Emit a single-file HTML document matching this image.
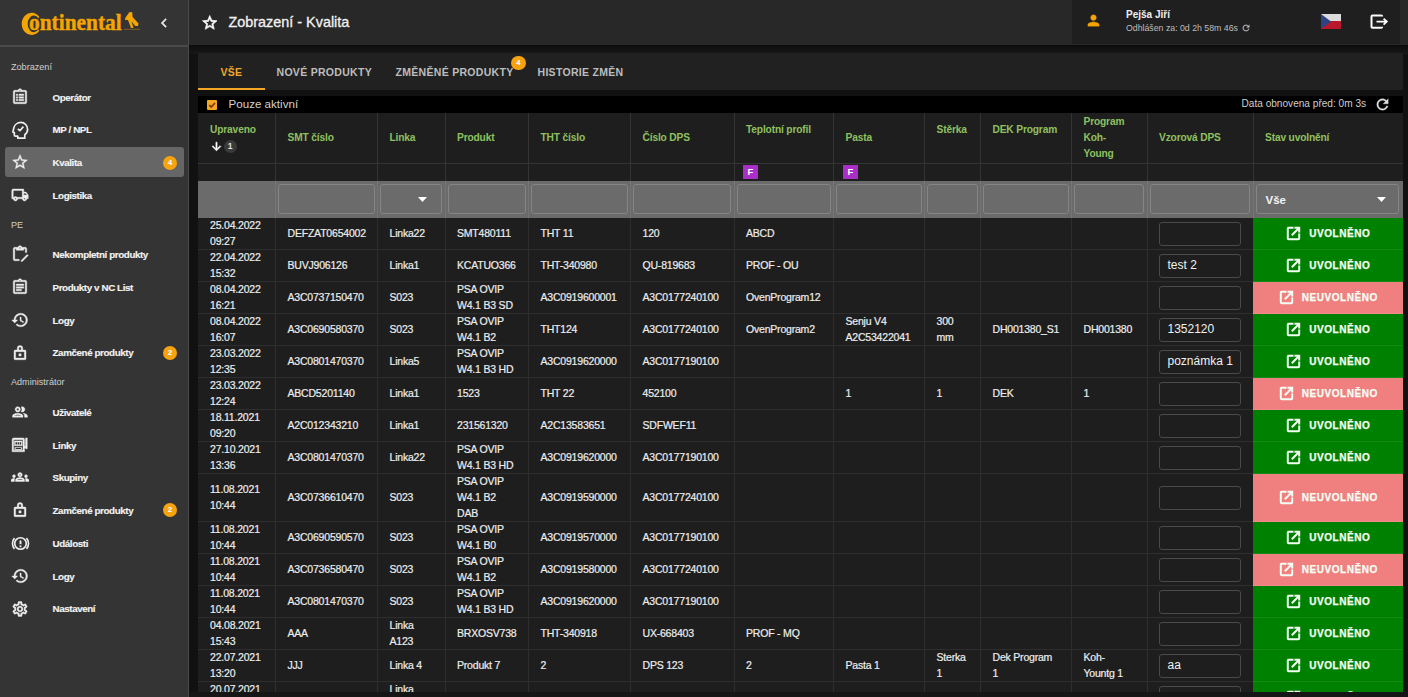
<!DOCTYPE html><html><head><meta charset="utf-8"><style>
*{box-sizing:border-box;margin:0;padding:0}
html,body{width:1408px;height:697px;overflow:hidden;background:#111111;font-family:"Liberation Sans",sans-serif;}
.a{position:absolute}
#side{left:0;top:0;width:189px;height:697px;background:#343434;border-right:1px solid #4a4a4a}
#sidehead{left:0;top:0;width:188px;height:47px;background:#343434;border-bottom:2px solid #4a4a4a}
#head{left:189px;top:0;width:1219px;height:45px;background:#282828}
#userbox{left:1072px;top:0;width:328px;height:43.5px;background:#1f1f1f}
.lbl{color:#cfcfcf;font-size:9.1px;left:11px;line-height:12px}
.it{left:52.5px;color:#f2f2f2;font-size:9.8px;font-weight:bold;line-height:12px;letter-spacing:-0.4px;-webkit-text-stroke:0.15px #f2f2f2}
.ico{left:12px;width:16px;height:16px}
.badge{width:14px;height:14px;border-radius:7px;background:#f5a30f;color:#fff;font-size:8px;text-align:center;line-height:14px;font-weight:bold}
#tabs{left:198px;top:53px;width:1205px;height:37.4px;background:#212121}
.tab{top:66px;font-size:10.5px;font-weight:bold;letter-spacing:0.3px;color:#bdbdbd;line-height:12px}
#chk{left:198px;top:96px;width:1205px;height:17.4px;background:#000}
#thead{left:198px;top:113.4px;width:1205px;height:104.4px;background:#1e1e1e}
#filt{left:198px;top:181px;width:1205px;height:36.8px;background:#6b6b6b}
.th{color:#8fc060;font-size:10.2px;font-weight:bold;line-height:16px;letter-spacing:-0.15px}
.vl{width:1px;background:#343434}
.hl{height:1px;background:#343434}
.td{color:#ededed;font-size:10.5px;line-height:16px;white-space:nowrap;letter-spacing:-0.2px;-webkit-text-stroke:0.2px #ededed}
.inp{border:1.5px solid #858585;border-radius:3px;background:#6b6b6b}
.vin{border:1.5px solid #4a4a4a;border-radius:3px;background:#1e1e1e;color:#f0f0f0;font-size:12px;padding-left:8px}
.st{color:#f4fff4;font-size:10px;font-weight:bold;letter-spacing:0.55px;text-align:center;-webkit-text-stroke:0.25px #f4fff4}
</style></head><body>
<div id="side" class="a"></div><div id="sidehead" class="a"></div>
<svg class="a" style="left:0;top:0" width="188" height="45" viewBox="0 0 188 45"><path d="M39.1 16.8A9.8 11.1 0 1 0 39.1 31L38.4 29.3A6.1 8.3 0 1 1 38.4 18.5Z" fill="#f5a500"/><path d="M129.5 12 L132.2 12.3 L132.6 17 L138.5 23.5 L138 26 L135.2 26 L131.5 21.5 L133.5 28 L131 28 L128 20 L125 20 L125.5 17.5 Z" fill="#f5a500"/><path d="M124 29.3h16" stroke="#a07020" stroke-width="0.7"/></svg>
<div class="a" style="left:29px;top:8.5px;font-family:'Liberation Serif',serif;font-weight:bold;color:#f5a500;font-size:23px;line-height:28px;transform:scaleX(0.93);transform-origin:0 0;-webkit-text-stroke:0.4px #f5a500">ontinental</div>
<svg class="a" style="left:155px;top:14px;" width="18" height="18" viewBox="0 0 24 24" fill="#e8e8e8" stroke="#e8e8e8" stroke-width="0.5"><path d="M15.41 7.41L14 6l-6 6 6 6 1.41-1.41L10.83 12z"/></svg>
<div class="a" style="left:5px;top:147.3px;width:178.6px;height:29.8px;border-radius:3px;background:#666666"></div>
<div class="a lbl" style="top:61px">Zobrazení</div>
<div class="a it" style="top:91.5px">Operátor</div>
<svg class="a" style="left:11px;top:88px;" width="18" height="18" viewBox="0 0 24 24" fill="#eeeeee" stroke="#eeeeee" stroke-width="0.5"><path d="M19 3h-4.18C14.4 1.84 13.3 1 12 1s-2.4.84-2.82 2H5c-1.1 0-2 .9-2 2v14c0 1.1.9 2 2 2h14c1.1 0 2-.9 2-2V5c0-1.1-.9-2-2-2zm-7 0c.55 0 1 .45 1 1s-.45 1-1 1-1-.45-1-1 .45-1 1-1zm7 16H5V5h14v14z"/><path d="M7 8h2v2H7zm0 3.5h2v2H7zm0 3.5h2v2H7zm3.5-7h6.5v2h-6.5zm0 3.5h6.5v2h-6.5zm0 3.5h6.5v2h-6.5z"/></svg>
<div class="a it" style="top:124.0px">MP / NPL</div>
<svg class="a" style="left:8px;top:118.0px" width="26" height="24" viewBox="0 0 26 24" fill="none" stroke="#eee" stroke-width="1.7" stroke-linejoin="round"><path d="M5.2 12.6C5.6 7.8 8.6 4.4 12.7 4.4C16.9 4.4 19.6 7.6 19.6 11.4C19.6 13.6 18.6 15.4 16.8 16.6V20.2H9.8V18.2H7.6C6.8 18.2 6.3 17.6 6.3 16.9V14.6L4.9 14.2Z"/><path d="M9.8 10.8 11.9 12.7 15.4 8.6"/></svg>
<div class="a it" style="top:156.5px">Kvalita</div>
<svg class="a" style="left:11px;top:153px;" width="18" height="18" viewBox="0 0 24 24" fill="#eeeeee" stroke="#eeeeee" stroke-width="0.5"><path d="M22 9.24l-7.19-.62L12 2 9.19 8.63 2 9.24l5.46 4.73L5.82 21 12 17.27 18.18 21l-1.63-7.03L22 9.24zM12 15.4l-3.76 2.27 1-4.28-3.32-2.88 4.38-.38L12 6.1l1.71 4.04 4.38.38-3.32 2.88 1 4.28L12 15.4z"/></svg>
<div class="a it" style="top:189.5px">Logistika</div>
<svg class="a" style="left:11px;top:186px;" width="18" height="18" viewBox="0 0 24 24" fill="#eeeeee" stroke="#eeeeee" stroke-width="0.5"><path d="M20 8h-3V4H3c-1.1 0-2 .9-2 2v11h2c0 1.66 1.34 3 3 3s3-1.34 3-3h6c0 1.66 1.34 3 3 3s3-1.34 3-3h2v-5l-3-4zm-.5 1.5l1.96 2.5H17V9.5h2.5zM6 18c-.55 0-1-.45-1-1s.45-1 1-1 1 .45 1 1-.45 1-1 1zm2.22-3c-.55-.61-1.33-1-2.22-1s-1.67.39-2.22 1H3V6h12v9H8.22zM18 18c-.55 0-1-.45-1-1s.45-1 1-1 1 .45 1 1-.45 1-1 1z"/></svg>
<div class="a lbl" style="top:219px">PE</div>
<div class="a it" style="top:248.5px">Nekompletní produkty</div>
<svg class="a" style="left:11px;top:245px;" width="18" height="18" viewBox="0 0 24 24" fill="#eeeeee" stroke="#eeeeee" stroke-width="0.5"><path d="M11 19H5V5h2v2h10V5h2v5h2V5c0-1.1-.9-2-2-2h-4.18C14.4 1.84 13.3 1 12 1s-2.4.84-2.82 2H5c-1.1 0-2 .9-2 2v14c0 1.1.9 2 2 2h6v-2zM12 3c.55 0 1 .45 1 1s-.45 1-1 1-1-.45-1-1 .45-1 1-1z"/><path d="M21.5 12.5l1.5 1.5-8 8h-1.5v-1.5z"/></svg>
<div class="a it" style="top:281.5px">Produkty v NC List</div>
<svg class="a" style="left:11px;top:278px;" width="18" height="18" viewBox="0 0 24 24" fill="#eeeeee" stroke="#eeeeee" stroke-width="0.5"><path d="M19 3h-4.18C14.4 1.84 13.3 1 12 1s-2.4.84-2.82 2H5c-1.1 0-2 .9-2 2v14c0 1.1.9 2 2 2h14c1.1 0 2-.9 2-2V5c0-1.1-.9-2-2-2zm-7 0c.55 0 1 .45 1 1s-.45 1-1 1-1-.45-1-1 .45-1 1-1zm7 16H5V5h14v14z"/><path d="M7 8h10v2H7zm0 3.5h10v2H7zm0 3.5h7v2H7z"/></svg>
<div class="a it" style="top:314.5px">Logy</div>
<svg class="a" style="left:11px;top:311px;" width="18" height="18" viewBox="0 0 24 24" fill="#eeeeee" stroke="#eeeeee" stroke-width="0.5"><path d="M13 3c-4.97 0-9 4.03-9 9H1l3.89 3.89.07.14L9 12H6c0-3.87 3.13-7 7-7s7 3.13 7 7-3.13 7-7 7c-1.93 0-3.68-.79-4.94-2.06l-1.42 1.42C8.27 19.99 10.51 21 13 21c4.97 0 9-4.03 9-9s-4.03-9-9-9zm-1 5v5l4.28 2.54.72-1.21-3.5-2.08V8H12z"/></svg>
<div class="a it" style="top:347.0px">Zamčené produkty</div>
<svg class="a" style="left:11px;top:343.5px;" width="18" height="18" viewBox="0 0 24 24" fill="#eeeeee" stroke="#eeeeee" stroke-width="0.5"><path fill-rule="evenodd" d="M5.5 8h13A1.5 1.5 0 0 1 20 9.5v10a1.5 1.5 0 0 1-1.5 1.5h-13A1.5 1.5 0 0 1 4 19.5v-10A1.5 1.5 0 0 1 5.5 8zM6.2 10.2v8.6h11.6v-8.6z"/><path d="M8.3 8V5.7a3.7 3.7 0 0 1 7.4 0V8h-2.1V5.7a1.6 1.6 0 0 0-3.2 0V8zM10.5 13h3v3h-3z"/></svg>
<div class="a lbl" style="top:376px">Administrátor</div>
<div class="a it" style="top:406.5px">Uživatelé</div>
<svg class="a" style="left:11px;top:403px;" width="18" height="18" viewBox="0 0 24 24" fill="#eeeeee" stroke="#eeeeee" stroke-width="0.5"><path d="M9 13.75c-2.34 0-7 1.17-7 3.5V19h14v-1.75c0-2.33-4.66-3.5-7-3.5zM4.34 17c.84-.58 2.870-1.25 4.66-1.25s3.82.67 4.66 1.25H4.34zM9 12c1.93 0 3.5-1.57 3.5-3.5S10.93 5 9 5 5.5 6.57 5.5 8.5 7.07 12 9 12zm0-5c.83 0 1.5.67 1.5 1.5S9.830 10 9 10s-1.5-.67-1.5-1.5S8.17 7 9 7zm7.04 6.81c1.16.84 1.96 1.96 1.96 3.44V19h4v-1.75c0-2.02-3.5-3.17-5.96-3.44zM15 12c1.93 0 3.5-1.57 3.5-3.5S16.93 5 15 5c-.54 0-1.04.13-1.5.35.63.89 1 1.98 1 3.15s-.37 2.26-1 3.15c.46.22.96.35 1.5.35z"/></svg>
<div class="a it" style="top:439.5px">Linky</div>
<svg class="a" style="left:11px;top:436px;" width="18" height="18" viewBox="0 0 24 24" fill="#eeeeee" stroke="#eeeeee" stroke-width="0.5"><path fill-rule="evenodd" d="M1.5 4.5Q1.5 2.5 3.5 2.5h12.5q2 0 2 2V21H1.5zM3.5 5v14h12.5V5z"/><path d="M4.5 6.5h10.5v6.5H4.5zM5 15.2h9.5v3H5zM19.3 2.5h2.4v14.5h-2.4zM17.5 13.5h2v2h-2z"/><path d="M6 8.2h2v3.2H6zM8.8 8.2h2v3.2h-2zM11.6 8.2h2v3.2h-2zM6.2 16h7.1v1.4H6.2z" fill="#343434" stroke="none"/></svg>
<div class="a it" style="top:471.5px">Skupiny</div>
<svg class="a" style="left:11px;top:468px;" width="18" height="18" viewBox="0 0 24 24" fill="#eeeeee" stroke="#eeeeee" stroke-width="0.5"><path d="M4 13c1.1 0 2-.9 2-2 0-1.1-.9-2-2-2s-2 .9-2 2c0 1.1.9 2 2 2zm1.13 1.1c-.37-.06-.74-.1-1.13-.1-.99 0-1.930.21-2.78.58C.48 14.9 0 15.62 0 16.43V18h4.5v-1.61c0-.83.23-1.61.63-2.29zM20 13c1.1 0 2-.9 2-2 0-1.1-.9-2-2-2s-2 .9-2 2c0 1.1.9 2 2 2zm4 3.43c0-.81-.48-1.53-1.22-1.85-.85-.37-1.79-.58-2.78-.58-.39 0-.76.04-1.13.1.4.68.63 1.46.63 2.29V18H24v-1.57zm-7.76-2.78c-1.17-.52-2.61-.9-4.24-.9-1.63 0-3.07.39-4.24.9C6.68 14.13 6 15.21 6 16.39V18h12v-1.61c0-1.18-.68-2.26-1.76-2.74zM8.07 16c.09-.23.13-.39.91-.69.97-.38 1.99-.56 3.02-.56s2.05.18 3.02.56c.77.3.81.46.91.69H8.07zM12 8c.55 0 1 .45 1 1s-.45 1-1 1-1-.45-1-1 .45-1 1-1m0-2c-1.66 0-3 1.34-3 3s1.34 3 3 3 3-1.34 3-3-1.34-3-3-3z"/></svg>
<div class="a it" style="top:504.5px">Zamčené produkty</div>
<svg class="a" style="left:11px;top:501px;" width="18" height="18" viewBox="0 0 24 24" fill="#eeeeee" stroke="#eeeeee" stroke-width="0.5"><path fill-rule="evenodd" d="M5.5 8h13A1.5 1.5 0 0 1 20 9.5v10a1.5 1.5 0 0 1-1.5 1.5h-13A1.5 1.5 0 0 1 4 19.5v-10A1.5 1.5 0 0 1 5.5 8zM6.2 10.2v8.6h11.6v-8.6z"/><path d="M8.3 8V5.7a3.7 3.7 0 0 1 7.4 0V8h-2.1V5.7a1.6 1.6 0 0 0-3.2 0V8zM10.5 13h3v3h-3z"/></svg>
<div class="a it" style="top:537.5px">Události</div>
<svg class="a" style="left:10.5px;top:533.5px" width="19" height="19" viewBox="0 0 24 24" fill="none" stroke="#eee" stroke-width="2.1"><circle cx="12" cy="12" r="7.3"/><path d="M4.4 5.2A10.4 10.4 0 0 0 4.4 18.8M19.6 5.2A10.4 10.4 0 0 1 19.6 18.8"/><path d="M12 8.2V13M12 14.6V16.6" stroke-width="2.4"/></svg>
<div class="a it" style="top:570.5px">Logy</div>
<svg class="a" style="left:11px;top:567px;" width="18" height="18" viewBox="0 0 24 24" fill="#eeeeee" stroke="#eeeeee" stroke-width="0.5"><path d="M13 3c-4.97 0-9 4.03-9 9H1l3.89 3.89.07.14L9 12H6c0-3.87 3.13-7 7-7s7 3.13 7 7-3.13 7-7 7c-1.93 0-3.68-.79-4.94-2.06l-1.42 1.42C8.27 19.99 10.51 21 13 21c4.97 0 9-4.03 9-9s-4.03-9-9-9zm-1 5v5l4.28 2.54.72-1.21-3.5-2.08V8H12z"/></svg>
<div class="a it" style="top:603.0px">Nastavení</div>
<svg class="a" style="left:11px;top:599.5px;" width="18" height="18" viewBox="0 0 24 24" fill="#eeeeee" stroke="#eeeeee" stroke-width="0.5"><path d="M19.43 12.98c.04-.32.07-.64.07-.98 0-.34-.03-.66-.07-.98l2.11-1.65c.19-.15.24-.42.12-.64l-2-3.46c-.09-.16-.26-.25-.44-.25-.06 0-.12.01-.17.03l-2.49 1c-.52-.4-1.08-.73-1.690-.98l-.38-2.65C14.46 2.18 14.25 2 14 2h-4c-.25 0-.46.18-.49.42l-.38 2.65c-.61.25-1.170.59-1.69.98l-2.49-1c-.06-.02-.12-.03-.18-.03-.17 0-.34.09-.43.25l-2 3.46c-.13.22-.07.49.12.64l2.11 1.65c-.04.32-.07.65-.07.98 0 .33.03.66.07.98l-2.11 1.65c-.19.15-.24.42-.12.64l2 3.46c.09.16.26.25.44.25.06 0 .12-.01.17-.03l2.49-1c.52.4 1.08.73 1.69.98l.38 2.65c.03.24.24.42.49.42h4c.25 0 .46-.18.49-.42l.38-2.65c.61-.25 1.17-.59 1.69-.98l2.49 1c.06.02.12.03.18.03.17 0 .34-.09.43-.25l2-3.46c.12-.22.07-.49-.12-.64l-2.11-1.65zm-1.98-1.71c.04.31.05.52.05.73 0 .21-.02.43-.05.73l-.14 1.13.89.7 1.08.84-.7 1.21-1.27-.51-1.04-.42-.9.68c-.43.32-.84.56-1.25.73l-1.06.43-.16 1.13-.2 1.35h-1.4l-.19-1.35-.16-1.13-1.06-.43c-.43-.18-.83-.41-1.23-.71l-.91-.7-1.06.43-1.27.51-.7-1.21 1.08-.84.89-.7-.14-1.13c-.03-.31-.05-.54-.05-.74s.02-.43.05-.73l.14-1.13-.89-.7-1.08-.84.7-1.21 1.27.51 1.04.42.9-.68c.43-.32.84-.56 1.25-.73l1.06-.43.16-1.13.2-1.35h1.39l.19 1.35.16 1.13 1.06.43c.43.18.83.41 1.23.71l.91.7 1.06-.43 1.27-.51.7 1.21-1.07.85-.89.7.14 1.130zM12 8c-2.21 0-4 1.790-4 4s1.79 4 4 4 4-1.79 4-4-1.79-4-4-4zm0 6c-1.1 0-2-.9-2-2s.9-2 2-2 2 .9 2 2-.9 2-2 2z"/></svg>
<div class="a badge" style="left:163px;top:155.5px">4</div>
<div class="a badge" style="left:163px;top:345.5px">2</div>
<div class="a badge" style="left:163px;top:503px">2</div>
<div id="head" class="a"></div><div id="userbox" class="a"></div>
<svg class="a" style="left:201px;top:13.8px;" width="17.5" height="17.5" viewBox="0 0 24 24" fill="#ffffff" stroke="#ffffff" stroke-width="0.9"><path d="M22 9.24l-7.19-.62L12 2 9.19 8.63 2 9.24l5.46 4.73L5.82 21 12 17.27 18.18 21l-1.63-7.03L22 9.24zM12 15.4l-3.76 2.27 1-4.28-3.32-2.88 4.38-.38L12 6.1l1.71 4.04 4.38.38-3.32 2.88 1 4.28L12 15.4z"/></svg>
<div class="a" style="left:228.5px;top:13px;color:#f2f2f2;font-size:14.4px;line-height:18px;-webkit-text-stroke:0.3px #f2f2f2">Zobrazení - Kvalita</div>
<svg class="a" style="left:1085px;top:11.7px;" width="17" height="17" viewBox="0 0 24 24" fill="#f5a500" stroke="#f5a500" stroke-width="0.5"><path d="M12 12c2.21 0 4-1.79 4-4s-1.79-4-4-4-4 1.79-4 4 1.79 4 4 4zm0 2c-2.67 0-8 1.34-8 4v2h16v-2c0-2.66-5.33-4-8-4z"/></svg>
<div class="a" style="left:1126px;top:8.7px;color:#f0f0f0;font-size:10px;font-weight:bold;line-height:12px">Pejša Jiří</div>
<div class="a" style="left:1126px;top:22px;color:#bdbdbd;font-size:8.75px;line-height:12px">Odhlášen za: 0d 2h 58m 46s</div>
<svg class="a" style="left:1241px;top:23px;" width="10" height="10" viewBox="0 0 24 24" fill="#bdbdbd" stroke="#bdbdbd" stroke-width="0.5"><path d="M17.65 6.35C16.2 4.9 14.21 4 12 4c-4.42 0-7.99 3.58-7.99 8s3.57 8 7.99 8c3.73 0 6.84-2.55 7.73-6h-2.08c-.82 2.33-3.04 4-5.65 4-3.31 0-6-2.69-6-6s2.69-6 6-6c1.66 0 3.14.69 4.22 1.78L13 11h7V4l-2.35 2.35z"/></svg>
<div class="a" style="left:1321px;top:14px;width:20px;height:15px;background:linear-gradient(#dcdcdc 50%,#b8182c 50%)"></div>
<svg class="a" style="left:1321px;top:14px" width="20" height="15"><path d="M0 0 L10 7.5 L0 15Z" fill="#2d4386"/></svg>
<svg class="a" style="left:1368px;top:12px" width="22" height="18" viewBox="0 0 22 18"><path d="M14.2 4.2V4.5Q14.2 3.5 13.2 3.5H4.5Q3.5 3.5 3.5 4.5V14.7Q3.5 15.7 4.5 15.7H13.2Q14.2 15.7 14.2 14.7" fill="none" stroke="#fff" stroke-width="2"/><path d="M8.5 9.6H18.5M15.6 6.6 18.8 9.6 15.6 12.6" fill="none" stroke="#fff" stroke-width="1.8"/></svg>
<div class="a" style="left:189px;top:45px;width:1219px;height:9px;background:linear-gradient(#0c0c0c,#181818)"></div>
<div id="tabs" class="a"></div>
<div class="a" style="left:198px;top:88px;width:67px;height:2px;background:#f5a623"></div>
<div class="a tab" style="left:220.5px;color:#f2a62a">VŠE</div>
<div class="a tab" style="left:276.5px">NOVÉ PRODUKTY</div>
<div class="a tab" style="left:395.5px">ZMĚNĚNÉ PRODUKTY</div>
<div class="a tab" style="left:537.5px">HISTORIE ZMĚN</div>
<div class="a badge" style="left:511px;top:55.7px;width:14.8px;height:14.8px;line-height:14.8px;font-size:7.5px;border-radius:8px">4</div>
<div id="chk" class="a"></div>
<div class="a" style="left:206.5px;top:99.5px;width:10px;height:10px;background:#f5a623;border-radius:1px"></div>
<svg class="a" style="left:206.5px;top:99.5px" width="10" height="10" viewBox="0 0 10 10"><path d="M2.2 5 4.2 7 8 3" fill="none" stroke="#7a3510" stroke-width="1.6"/></svg>
<div class="a" style="left:228.5px;top:96.5px;color:#d0d0d0;font-size:11.6px;line-height:14px">Pouze aktivní</div>
<div class="a" style="left:1241.5px;top:98px;color:#cfcfcf;font-size:10.1px;line-height:12px">Data obnovena před: 0m 3s</div>
<svg class="a" style="left:1373.5px;top:96px;" width="17" height="17" viewBox="0 0 24 24" fill="#e0e0e0" stroke="#e0e0e0" stroke-width="0.5"><path d="M17.65 6.35C16.2 4.9 14.21 4 12 4c-4.42 0-7.99 3.58-7.99 8s3.57 8 7.99 8c3.73 0 6.84-2.55 7.73-6h-2.08c-.82 2.33-3.04 4-5.65 4-3.31 0-6-2.69-6-6s2.69-6 6-6c1.66 0 3.14.69 4.22 1.78L13 11h7V4l-2.35 2.35z"/></svg>
<div id="thead" class="a"></div><div id="filt" class="a"></div>
<div class="a th" style="left:210px;top:122px">Upraveno</div>
<div class="a th" style="left:287.5px;top:130px">SMT číslo</div>
<div class="a th" style="left:389.5px;top:130px">Linka</div>
<div class="a th" style="left:457px;top:130px">Produkt</div>
<div class="a th" style="left:540.5px;top:130px">THT číslo</div>
<div class="a th" style="left:642.5px;top:130px">Číslo DPS</div>
<div class="a th" style="left:746px;top:122px">Teplotní profil</div>
<div class="a th" style="left:845.5px;top:130px">Pasta</div>
<div class="a th" style="left:936.5px;top:122px">Stěrka</div>
<div class="a th" style="left:992.5px;top:122px">DEK Program</div>
<div class="a th" style="left:1083.5px;top:114px">Program<br>Koh-<br>Young</div>
<div class="a th" style="left:1159px;top:130px">Vzorová DPS</div>
<div class="a th" style="left:1265px;top:130px">Stav uvolnění</div>
<div class="a" style="left:743px;top:164.5px;width:14.5px;height:14.5px;background:#a92fc6"><span class="a" style="left:4.6px;top:2.5px;color:#fff;font-size:9.5px;font-weight:bold;line-height:10px">F</span></div>
<div class="a" style="left:843px;top:164.5px;width:14.5px;height:14.5px;background:#a92fc6"><span class="a" style="left:4.6px;top:2.5px;color:#fff;font-size:9.5px;font-weight:bold;line-height:10px">F</span></div>
<svg class="a" style="left:209.5px;top:139.5px;" width="13" height="13" viewBox="0 0 24 24" fill="#ffffff" stroke="#ffffff" stroke-width="1.2"><path d="M20 12l-1.41-1.41L13 16.17V4h-2v12.17l-5.58-5.59L4 12l8 8 8-8z"/></svg>
<div class="a" style="left:223.5px;top:140px;width:13px;height:13px;border-radius:7px;background:#3a3a3a;color:#e0e0e0;font-size:8.5px;font-weight:bold;text-align:center;line-height:13px">1</div>
<div class="a hl" style="left:198px;top:162.5px;width:1205px"></div>
<div class="a inp" style="left:278.0px;top:183.5px;width:96.5px;height:30.5px"></div>
<div class="a inp" style="left:380.0px;top:183.5px;width:62.0px;height:30.5px"></div>
<div class="a inp" style="left:447.5px;top:183.5px;width:78.0px;height:30.5px"></div>
<div class="a inp" style="left:531.0px;top:183.5px;width:96.5px;height:30.5px"></div>
<div class="a inp" style="left:633.0px;top:183.5px;width:98.0px;height:30.5px"></div>
<div class="a inp" style="left:736.5px;top:183.5px;width:94.0px;height:30.5px"></div>
<div class="a inp" style="left:836.0px;top:183.5px;width:85.5px;height:30.5px"></div>
<div class="a inp" style="left:927.0px;top:183.5px;width:50.5px;height:30.5px"></div>
<div class="a inp" style="left:983.0px;top:183.5px;width:85.5px;height:30.5px"></div>
<div class="a inp" style="left:1074.0px;top:183.5px;width:70.0px;height:30.5px"></div>
<div class="a inp" style="left:1149.5px;top:183.5px;width:100.5px;height:30.5px"></div>
<div class="a inp" style="left:1256px;top:184px;width:143px;height:30px"></div>
<div class="a" style="left:1265.5px;top:193px;color:#f4f4f4;font-size:11.5px;font-weight:bold;line-height:14px">Vše</div>
<svg class="a" style="left:1377px;top:197px" width="9" height="5"><path d="M0 0H9L4.5 5Z" fill="#fff"/></svg>
<svg class="a" style="left:418px;top:197px" width="9" height="5"><path d="M0 0H9L4.5 5Z" fill="#fff"/></svg>
<div class="a" style="left:198px;top:217.8px;width:1205px;height:480px;background:#1e1e1e"></div>
<div class="a vl" style="left:275.0px;top:113.4px;height:68px"></div><div class="a vl" style="left:275.0px;top:181px;height:36.8px;background:#757575"></div>
<div class="a vl" style="left:275.0px;top:217.8px;height:480px;background:#2e2e2e"></div>
<div class="a vl" style="left:377.0px;top:113.4px;height:68px"></div><div class="a vl" style="left:377.0px;top:181px;height:36.8px;background:#757575"></div>
<div class="a vl" style="left:377.0px;top:217.8px;height:480px;background:#2e2e2e"></div>
<div class="a vl" style="left:444.5px;top:113.4px;height:68px"></div><div class="a vl" style="left:444.5px;top:181px;height:36.8px;background:#757575"></div>
<div class="a vl" style="left:444.5px;top:217.8px;height:480px;background:#2e2e2e"></div>
<div class="a vl" style="left:528.0px;top:113.4px;height:68px"></div><div class="a vl" style="left:528.0px;top:181px;height:36.8px;background:#757575"></div>
<div class="a vl" style="left:528.0px;top:217.8px;height:480px;background:#2e2e2e"></div>
<div class="a vl" style="left:630.0px;top:113.4px;height:68px"></div><div class="a vl" style="left:630.0px;top:181px;height:36.8px;background:#757575"></div>
<div class="a vl" style="left:630.0px;top:217.8px;height:480px;background:#2e2e2e"></div>
<div class="a vl" style="left:733.5px;top:113.4px;height:68px"></div><div class="a vl" style="left:733.5px;top:181px;height:36.8px;background:#757575"></div>
<div class="a vl" style="left:733.5px;top:217.8px;height:480px;background:#2e2e2e"></div>
<div class="a vl" style="left:833.0px;top:113.4px;height:68px"></div><div class="a vl" style="left:833.0px;top:181px;height:36.8px;background:#757575"></div>
<div class="a vl" style="left:833.0px;top:217.8px;height:480px;background:#2e2e2e"></div>
<div class="a vl" style="left:924.0px;top:113.4px;height:68px"></div><div class="a vl" style="left:924.0px;top:181px;height:36.8px;background:#757575"></div>
<div class="a vl" style="left:924.0px;top:217.8px;height:480px;background:#2e2e2e"></div>
<div class="a vl" style="left:980.0px;top:113.4px;height:68px"></div><div class="a vl" style="left:980.0px;top:181px;height:36.8px;background:#757575"></div>
<div class="a vl" style="left:980.0px;top:217.8px;height:480px;background:#2e2e2e"></div>
<div class="a vl" style="left:1071.0px;top:113.4px;height:68px"></div><div class="a vl" style="left:1071.0px;top:181px;height:36.8px;background:#757575"></div>
<div class="a vl" style="left:1071.0px;top:217.8px;height:480px;background:#2e2e2e"></div>
<div class="a vl" style="left:1146.5px;top:113.4px;height:68px"></div><div class="a vl" style="left:1146.5px;top:181px;height:36.8px;background:#757575"></div>
<div class="a vl" style="left:1146.5px;top:217.8px;height:480px;background:#2e2e2e"></div>
<div class="a vl" style="left:1252.5px;top:113.4px;height:68px"></div><div class="a vl" style="left:1252.5px;top:181px;height:36.8px;background:#757575"></div>
<div class="a vl" style="left:1252.5px;top:217.8px;height:480px;background:#2e2e2e"></div>
<div class="a td" style="left:210px;top:217.1px">25.04.2022<br>09:27</div>
<div class="a td" style="left:287.5px;top:225.1px">DEFZAT0654002</div>
<div class="a td" style="left:389.5px;top:225.1px">Linka22</div>
<div class="a td" style="left:457px;top:225.1px">SMT480111</div>
<div class="a td" style="left:540.5px;top:225.1px">THT 11</div>
<div class="a td" style="left:642.5px;top:225.1px">120</div>
<div class="a td" style="left:746px;top:225.1px">ABCD</div>
<div class="a vin" style="left:1158.5px;top:221.6px;width:82px;height:24px;line-height:21px"></div>
<div class="a" style="left:1253px;top:217.6px;width:150px;height:32.0px;background:#008000"></div>
<div class="a hl" style="left:198px;top:249.1px;width:1055px;background:#2e2e2e"></div><div class="a hl" style="left:1253px;top:249.1px;width:150px;background:rgba(255,255,255,0.08)"></div>
<div class="a st" style="left:1253px;top:225.6px;width:150px;height:16px;display:flex;align-items:center;justify-content:center;padding-left:0.5px"><svg width="15" height="15" viewBox="0 0 16 16" fill="none" stroke="#f4fff4" stroke-width="2.1" style="margin-right:8px"><path d="M8 1.9H2.9a1 1 0 0 0-1 1v10.2a1 1 0 0 0 1 1h10.2a1 1 0 0 0 1-1V8"/><path d="M6.2 9.8 13.6 2.4M9 1.9h5.1V7"/></svg><span style="line-height:12px">UVOLNĚNO</span></div>
<div class="a td" style="left:210px;top:249.10000000000002px">22.04.2022<br>15:32</div>
<div class="a td" style="left:287.5px;top:257.1px">BUVJ906126</div>
<div class="a td" style="left:389.5px;top:257.1px">Linka1</div>
<div class="a td" style="left:457px;top:257.1px">KCATUO366</div>
<div class="a td" style="left:540.5px;top:257.1px">THT-340980</div>
<div class="a td" style="left:642.5px;top:257.1px">QU-819683</div>
<div class="a td" style="left:746px;top:257.1px">PROF - OU</div>
<div class="a vin" style="left:1158.5px;top:253.60000000000002px;width:82px;height:24px;line-height:21px">test 2</div>
<div class="a" style="left:1253px;top:249.6px;width:150px;height:32.0px;background:#008000"></div>
<div class="a hl" style="left:198px;top:281.1px;width:1055px;background:#2e2e2e"></div><div class="a hl" style="left:1253px;top:281.1px;width:150px;background:rgba(255,255,255,0.08)"></div>
<div class="a st" style="left:1253px;top:257.6px;width:150px;height:16px;display:flex;align-items:center;justify-content:center;padding-left:0.5px"><svg width="15" height="15" viewBox="0 0 16 16" fill="none" stroke="#f4fff4" stroke-width="2.1" style="margin-right:8px"><path d="M8 1.9H2.9a1 1 0 0 0-1 1v10.2a1 1 0 0 0 1 1h10.2a1 1 0 0 0 1-1V8"/><path d="M6.2 9.8 13.6 2.4M9 1.9h5.1V7"/></svg><span style="line-height:12px">UVOLNĚNO</span></div>
<div class="a td" style="left:210px;top:281.1px">08.04.2022<br>16:21</div>
<div class="a td" style="left:287.5px;top:289.1px">A3C0737150470</div>
<div class="a td" style="left:389.5px;top:289.1px">S023</div>
<div class="a td" style="left:457px;top:281.1px">PSA OVIP<br>W4.1 B3 SD</div>
<div class="a td" style="left:540.5px;top:289.1px">A3C0919600001</div>
<div class="a td" style="left:642.5px;top:289.1px">A3C0177240100</div>
<div class="a td" style="left:746px;top:289.1px">OvenProgram12</div>
<div class="a vin" style="left:1158.5px;top:285.6px;width:82px;height:24px;line-height:21px"></div>
<div class="a" style="left:1253px;top:281.6px;width:150px;height:32.0px;background:#f08080"></div>
<div class="a hl" style="left:198px;top:313.1px;width:1055px;background:#2e2e2e"></div><div class="a hl" style="left:1253px;top:313.1px;width:150px;background:rgba(255,255,255,0.08)"></div>
<div class="a st" style="left:1253px;top:289.6px;width:150px;height:16px;display:flex;align-items:center;justify-content:center;padding-left:0.5px"><svg width="15" height="15" viewBox="0 0 16 16" fill="none" stroke="#f4fff4" stroke-width="2.1" style="margin-right:8px"><path d="M8 1.9H2.9a1 1 0 0 0-1 1v10.2a1 1 0 0 0 1 1h10.2a1 1 0 0 0 1-1V8"/><path d="M6.2 9.8 13.6 2.4M9 1.9h5.1V7"/></svg><span style="line-height:12px">NEUVOLNĚNO</span></div>
<div class="a td" style="left:210px;top:313.1px">08.04.2022<br>16:07</div>
<div class="a td" style="left:287.5px;top:321.1px">A3C0690580370</div>
<div class="a td" style="left:389.5px;top:321.1px">S023</div>
<div class="a td" style="left:457px;top:313.1px">PSA OVIP<br>W4.1 B2</div>
<div class="a td" style="left:540.5px;top:321.1px">THT124</div>
<div class="a td" style="left:642.5px;top:321.1px">A3C0177240100</div>
<div class="a td" style="left:746px;top:321.1px">OvenProgram2</div>
<div class="a td" style="left:845.5px;top:313.1px">Senju V4<br>A2C53422041</div>
<div class="a td" style="left:936.5px;top:313.1px">300<br>mm</div>
<div class="a td" style="left:992.5px;top:321.1px">DH001380_S1</div>
<div class="a td" style="left:1083.5px;top:321.1px">DH001380</div>
<div class="a vin" style="left:1158.5px;top:317.6px;width:82px;height:24px;line-height:21px">1352120</div>
<div class="a" style="left:1253px;top:313.6px;width:150px;height:32.0px;background:#008000"></div>
<div class="a hl" style="left:198px;top:345.1px;width:1055px;background:#2e2e2e"></div><div class="a hl" style="left:1253px;top:345.1px;width:150px;background:rgba(255,255,255,0.08)"></div>
<div class="a st" style="left:1253px;top:321.6px;width:150px;height:16px;display:flex;align-items:center;justify-content:center;padding-left:0.5px"><svg width="15" height="15" viewBox="0 0 16 16" fill="none" stroke="#f4fff4" stroke-width="2.1" style="margin-right:8px"><path d="M8 1.9H2.9a1 1 0 0 0-1 1v10.2a1 1 0 0 0 1 1h10.2a1 1 0 0 0 1-1V8"/><path d="M6.2 9.8 13.6 2.4M9 1.9h5.1V7"/></svg><span style="line-height:12px">UVOLNĚNO</span></div>
<div class="a td" style="left:210px;top:345.1px">23.03.2022<br>12:35</div>
<div class="a td" style="left:287.5px;top:353.1px">A3C0801470370</div>
<div class="a td" style="left:389.5px;top:353.1px">Linka5</div>
<div class="a td" style="left:457px;top:345.1px">PSA OVIP<br>W4.1 B3 HD</div>
<div class="a td" style="left:540.5px;top:353.1px">A3C0919620000</div>
<div class="a td" style="left:642.5px;top:353.1px">A3C0177190100</div>
<div class="a vin" style="left:1158.5px;top:349.6px;width:82px;height:24px;line-height:21px">poznámka 1</div>
<div class="a" style="left:1253px;top:345.6px;width:150px;height:32.0px;background:#008000"></div>
<div class="a hl" style="left:198px;top:377.1px;width:1055px;background:#2e2e2e"></div><div class="a hl" style="left:1253px;top:377.1px;width:150px;background:rgba(255,255,255,0.08)"></div>
<div class="a st" style="left:1253px;top:353.6px;width:150px;height:16px;display:flex;align-items:center;justify-content:center;padding-left:0.5px"><svg width="15" height="15" viewBox="0 0 16 16" fill="none" stroke="#f4fff4" stroke-width="2.1" style="margin-right:8px"><path d="M8 1.9H2.9a1 1 0 0 0-1 1v10.2a1 1 0 0 0 1 1h10.2a1 1 0 0 0 1-1V8"/><path d="M6.2 9.8 13.6 2.4M9 1.9h5.1V7"/></svg><span style="line-height:12px">UVOLNĚNO</span></div>
<div class="a td" style="left:210px;top:377.1px">23.03.2022<br>12:24</div>
<div class="a td" style="left:287.5px;top:385.1px">ABCD5201140</div>
<div class="a td" style="left:389.5px;top:385.1px">Linka1</div>
<div class="a td" style="left:457px;top:385.1px">1523</div>
<div class="a td" style="left:540.5px;top:385.1px">THT 22</div>
<div class="a td" style="left:642.5px;top:385.1px">452100</div>
<div class="a td" style="left:845.5px;top:385.1px">1</div>
<div class="a td" style="left:936.5px;top:385.1px">1</div>
<div class="a td" style="left:992.5px;top:385.1px">DEK</div>
<div class="a td" style="left:1083.5px;top:385.1px">1</div>
<div class="a vin" style="left:1158.5px;top:381.6px;width:82px;height:24px;line-height:21px"></div>
<div class="a" style="left:1253px;top:377.6px;width:150px;height:32.0px;background:#f08080"></div>
<div class="a hl" style="left:198px;top:409.1px;width:1055px;background:#2e2e2e"></div><div class="a hl" style="left:1253px;top:409.1px;width:150px;background:rgba(255,255,255,0.08)"></div>
<div class="a st" style="left:1253px;top:385.6px;width:150px;height:16px;display:flex;align-items:center;justify-content:center;padding-left:0.5px"><svg width="15" height="15" viewBox="0 0 16 16" fill="none" stroke="#f4fff4" stroke-width="2.1" style="margin-right:8px"><path d="M8 1.9H2.9a1 1 0 0 0-1 1v10.2a1 1 0 0 0 1 1h10.2a1 1 0 0 0 1-1V8"/><path d="M6.2 9.8 13.6 2.4M9 1.9h5.1V7"/></svg><span style="line-height:12px">NEUVOLNĚNO</span></div>
<div class="a td" style="left:210px;top:409.1px">18.11.2021<br>09:20</div>
<div class="a td" style="left:287.5px;top:417.1px">A2C012343210</div>
<div class="a td" style="left:389.5px;top:417.1px">Linka1</div>
<div class="a td" style="left:457px;top:417.1px">231561320</div>
<div class="a td" style="left:540.5px;top:417.1px">A2C13583651</div>
<div class="a td" style="left:642.5px;top:417.1px">SDFWEF11</div>
<div class="a vin" style="left:1158.5px;top:413.6px;width:82px;height:24px;line-height:21px"></div>
<div class="a" style="left:1253px;top:409.6px;width:150px;height:32.0px;background:#008000"></div>
<div class="a hl" style="left:198px;top:441.1px;width:1055px;background:#2e2e2e"></div><div class="a hl" style="left:1253px;top:441.1px;width:150px;background:rgba(255,255,255,0.08)"></div>
<div class="a st" style="left:1253px;top:417.6px;width:150px;height:16px;display:flex;align-items:center;justify-content:center;padding-left:0.5px"><svg width="15" height="15" viewBox="0 0 16 16" fill="none" stroke="#f4fff4" stroke-width="2.1" style="margin-right:8px"><path d="M8 1.9H2.9a1 1 0 0 0-1 1v10.2a1 1 0 0 0 1 1h10.2a1 1 0 0 0 1-1V8"/><path d="M6.2 9.8 13.6 2.4M9 1.9h5.1V7"/></svg><span style="line-height:12px">UVOLNĚNO</span></div>
<div class="a td" style="left:210px;top:441.1px">27.10.2021<br>13:36</div>
<div class="a td" style="left:287.5px;top:449.1px">A3C0801470370</div>
<div class="a td" style="left:389.5px;top:449.1px">Linka22</div>
<div class="a td" style="left:457px;top:441.1px">PSA OVIP<br>W4.1 B3 HD</div>
<div class="a td" style="left:540.5px;top:449.1px">A3C0919620000</div>
<div class="a td" style="left:642.5px;top:449.1px">A3C0177190100</div>
<div class="a vin" style="left:1158.5px;top:445.6px;width:82px;height:24px;line-height:21px"></div>
<div class="a" style="left:1253px;top:441.6px;width:150px;height:32.0px;background:#008000"></div>
<div class="a hl" style="left:198px;top:473.1px;width:1055px;background:#2e2e2e"></div><div class="a hl" style="left:1253px;top:473.1px;width:150px;background:rgba(255,255,255,0.08)"></div>
<div class="a st" style="left:1253px;top:449.6px;width:150px;height:16px;display:flex;align-items:center;justify-content:center;padding-left:0.5px"><svg width="15" height="15" viewBox="0 0 16 16" fill="none" stroke="#f4fff4" stroke-width="2.1" style="margin-right:8px"><path d="M8 1.9H2.9a1 1 0 0 0-1 1v10.2a1 1 0 0 0 1 1h10.2a1 1 0 0 0 1-1V8"/><path d="M6.2 9.8 13.6 2.4M9 1.9h5.1V7"/></svg><span style="line-height:12px">UVOLNĚNO</span></div>
<div class="a td" style="left:210px;top:481.15000000000003px">11.08.2021<br>10:44</div>
<div class="a td" style="left:287.5px;top:489.15000000000003px">A3C0736610470</div>
<div class="a td" style="left:389.5px;top:489.15000000000003px">S023</div>
<div class="a td" style="left:457px;top:473.15000000000003px">PSA OVIP<br>W4.1 B2<br>DAB</div>
<div class="a td" style="left:540.5px;top:489.15000000000003px">A3C0919590000</div>
<div class="a td" style="left:642.5px;top:489.15000000000003px">A3C0177240100</div>
<div class="a vin" style="left:1158.5px;top:485.65000000000003px;width:82px;height:24px;line-height:21px"></div>
<div class="a" style="left:1253px;top:473.6px;width:150px;height:48.1px;background:#f08080"></div>
<div class="a hl" style="left:198px;top:521.2px;width:1055px;background:#2e2e2e"></div><div class="a hl" style="left:1253px;top:521.2px;width:150px;background:rgba(255,255,255,0.08)"></div>
<div class="a st" style="left:1253px;top:489.65000000000003px;width:150px;height:16px;display:flex;align-items:center;justify-content:center;padding-left:0.5px"><svg width="15" height="15" viewBox="0 0 16 16" fill="none" stroke="#f4fff4" stroke-width="2.1" style="margin-right:8px"><path d="M8 1.9H2.9a1 1 0 0 0-1 1v10.2a1 1 0 0 0 1 1h10.2a1 1 0 0 0 1-1V8"/><path d="M6.2 9.8 13.6 2.4M9 1.9h5.1V7"/></svg><span style="line-height:12px">NEUVOLNĚNO</span></div>
<div class="a td" style="left:210px;top:521.2px">11.08.2021<br>10:44</div>
<div class="a td" style="left:287.5px;top:529.2px">A3C0690590570</div>
<div class="a td" style="left:389.5px;top:529.2px">S023</div>
<div class="a td" style="left:457px;top:521.2px">PSA OVIP<br>W4.1 B0</div>
<div class="a td" style="left:540.5px;top:529.2px">A3C0919570000</div>
<div class="a td" style="left:642.5px;top:529.2px">A3C0177190100</div>
<div class="a vin" style="left:1158.5px;top:525.7px;width:82px;height:24px;line-height:21px"></div>
<div class="a" style="left:1253px;top:521.7px;width:150px;height:32.0px;background:#008000"></div>
<div class="a hl" style="left:198px;top:553.2px;width:1055px;background:#2e2e2e"></div><div class="a hl" style="left:1253px;top:553.2px;width:150px;background:rgba(255,255,255,0.08)"></div>
<div class="a st" style="left:1253px;top:529.7px;width:150px;height:16px;display:flex;align-items:center;justify-content:center;padding-left:0.5px"><svg width="15" height="15" viewBox="0 0 16 16" fill="none" stroke="#f4fff4" stroke-width="2.1" style="margin-right:8px"><path d="M8 1.9H2.9a1 1 0 0 0-1 1v10.2a1 1 0 0 0 1 1h10.2a1 1 0 0 0 1-1V8"/><path d="M6.2 9.8 13.6 2.4M9 1.9h5.1V7"/></svg><span style="line-height:12px">UVOLNĚNO</span></div>
<div class="a td" style="left:210px;top:553.2px">11.08.2021<br>10:44</div>
<div class="a td" style="left:287.5px;top:561.2px">A3C0736580470</div>
<div class="a td" style="left:389.5px;top:561.2px">S023</div>
<div class="a td" style="left:457px;top:553.2px">PSA OVIP<br>W4.1 B2</div>
<div class="a td" style="left:540.5px;top:561.2px">A3C0919580000</div>
<div class="a td" style="left:642.5px;top:561.2px">A3C0177240100</div>
<div class="a vin" style="left:1158.5px;top:557.7px;width:82px;height:24px;line-height:21px"></div>
<div class="a" style="left:1253px;top:553.7px;width:150px;height:32.0px;background:#f08080"></div>
<div class="a hl" style="left:198px;top:585.2px;width:1055px;background:#2e2e2e"></div><div class="a hl" style="left:1253px;top:585.2px;width:150px;background:rgba(255,255,255,0.08)"></div>
<div class="a st" style="left:1253px;top:561.7px;width:150px;height:16px;display:flex;align-items:center;justify-content:center;padding-left:0.5px"><svg width="15" height="15" viewBox="0 0 16 16" fill="none" stroke="#f4fff4" stroke-width="2.1" style="margin-right:8px"><path d="M8 1.9H2.9a1 1 0 0 0-1 1v10.2a1 1 0 0 0 1 1h10.2a1 1 0 0 0 1-1V8"/><path d="M6.2 9.8 13.6 2.4M9 1.9h5.1V7"/></svg><span style="line-height:12px">NEUVOLNĚNO</span></div>
<div class="a td" style="left:210px;top:585.2px">11.08.2021<br>10:44</div>
<div class="a td" style="left:287.5px;top:593.2px">A3C0801470370</div>
<div class="a td" style="left:389.5px;top:593.2px">S023</div>
<div class="a td" style="left:457px;top:585.2px">PSA OVIP<br>W4.1 B3 HD</div>
<div class="a td" style="left:540.5px;top:593.2px">A3C0919620000</div>
<div class="a td" style="left:642.5px;top:593.2px">A3C0177190100</div>
<div class="a vin" style="left:1158.5px;top:589.7px;width:82px;height:24px;line-height:21px"></div>
<div class="a" style="left:1253px;top:585.7px;width:150px;height:32.0px;background:#008000"></div>
<div class="a hl" style="left:198px;top:617.2px;width:1055px;background:#2e2e2e"></div><div class="a hl" style="left:1253px;top:617.2px;width:150px;background:rgba(255,255,255,0.08)"></div>
<div class="a st" style="left:1253px;top:593.7px;width:150px;height:16px;display:flex;align-items:center;justify-content:center;padding-left:0.5px"><svg width="15" height="15" viewBox="0 0 16 16" fill="none" stroke="#f4fff4" stroke-width="2.1" style="margin-right:8px"><path d="M8 1.9H2.9a1 1 0 0 0-1 1v10.2a1 1 0 0 0 1 1h10.2a1 1 0 0 0 1-1V8"/><path d="M6.2 9.8 13.6 2.4M9 1.9h5.1V7"/></svg><span style="line-height:12px">UVOLNĚNO</span></div>
<div class="a td" style="left:210px;top:617.2px">04.08.2021<br>15:43</div>
<div class="a td" style="left:287.5px;top:625.2px">AAA</div>
<div class="a td" style="left:389.5px;top:617.2px">Linka<br>A123</div>
<div class="a td" style="left:457px;top:625.2px">BRXOSV738</div>
<div class="a td" style="left:540.5px;top:625.2px">THT-340918</div>
<div class="a td" style="left:642.5px;top:625.2px">UX-668403</div>
<div class="a td" style="left:746px;top:625.2px">PROF - MQ</div>
<div class="a vin" style="left:1158.5px;top:621.7px;width:82px;height:24px;line-height:21px"></div>
<div class="a" style="left:1253px;top:617.7px;width:150px;height:32.0px;background:#008000"></div>
<div class="a hl" style="left:198px;top:649.2px;width:1055px;background:#2e2e2e"></div><div class="a hl" style="left:1253px;top:649.2px;width:150px;background:rgba(255,255,255,0.08)"></div>
<div class="a st" style="left:1253px;top:625.7px;width:150px;height:16px;display:flex;align-items:center;justify-content:center;padding-left:0.5px"><svg width="15" height="15" viewBox="0 0 16 16" fill="none" stroke="#f4fff4" stroke-width="2.1" style="margin-right:8px"><path d="M8 1.9H2.9a1 1 0 0 0-1 1v10.2a1 1 0 0 0 1 1h10.2a1 1 0 0 0 1-1V8"/><path d="M6.2 9.8 13.6 2.4M9 1.9h5.1V7"/></svg><span style="line-height:12px">UVOLNĚNO</span></div>
<div class="a td" style="left:210px;top:649.2px">22.07.2021<br>13:20</div>
<div class="a td" style="left:287.5px;top:657.2px">JJJ</div>
<div class="a td" style="left:389.5px;top:657.2px">Linka 4</div>
<div class="a td" style="left:457px;top:657.2px">Produkt 7</div>
<div class="a td" style="left:540.5px;top:657.2px">2</div>
<div class="a td" style="left:642.5px;top:657.2px">DPS 123</div>
<div class="a td" style="left:746px;top:657.2px">2</div>
<div class="a td" style="left:845.5px;top:657.2px">Pasta 1</div>
<div class="a td" style="left:936.5px;top:649.2px">Sterka<br>1</div>
<div class="a td" style="left:992.5px;top:649.2px">Dek Program<br>1</div>
<div class="a td" style="left:1083.5px;top:649.2px">Koh-<br>Yountg 1</div>
<div class="a vin" style="left:1158.5px;top:653.7px;width:82px;height:24px;line-height:21px">aa</div>
<div class="a" style="left:1253px;top:649.7px;width:150px;height:32.0px;background:#008000"></div>
<div class="a hl" style="left:198px;top:681.2px;width:1055px;background:#2e2e2e"></div><div class="a hl" style="left:1253px;top:681.2px;width:150px;background:rgba(255,255,255,0.08)"></div>
<div class="a st" style="left:1253px;top:657.7px;width:150px;height:16px;display:flex;align-items:center;justify-content:center;padding-left:0.5px"><svg width="15" height="15" viewBox="0 0 16 16" fill="none" stroke="#f4fff4" stroke-width="2.1" style="margin-right:8px"><path d="M8 1.9H2.9a1 1 0 0 0-1 1v10.2a1 1 0 0 0 1 1h10.2a1 1 0 0 0 1-1V8"/><path d="M6.2 9.8 13.6 2.4M9 1.9h5.1V7"/></svg><span style="line-height:12px">UVOLNĚNO</span></div>
<div class="a td" style="left:210px;top:681.2px">20.07.2021<br></div>
<div class="a td" style="left:389.5px;top:681.2px">Linka<br></div>
<div class="a vin" style="left:1158.5px;top:685.7px;width:82px;height:24px;line-height:21px"></div>
<div class="a" style="left:1253px;top:681.7px;width:150px;height:32.0px;background:#008000"></div>
<div class="a hl" style="left:198px;top:713.2px;width:1055px;background:#2e2e2e"></div><div class="a hl" style="left:1253px;top:713.2px;width:150px;background:rgba(255,255,255,0.08)"></div>
<div class="a st" style="left:1253px;top:689.7px;width:150px;height:16px;display:flex;align-items:center;justify-content:center;padding-left:0.5px"><svg width="15" height="15" viewBox="0 0 16 16" fill="none" stroke="#f4fff4" stroke-width="2.1" style="margin-right:8px"><path d="M8 1.9H2.9a1 1 0 0 0-1 1v10.2a1 1 0 0 0 1 1h10.2a1 1 0 0 0 1-1V8"/><path d="M6.2 9.8 13.6 2.4M9 1.9h5.1V7"/></svg><span style="line-height:12px">UVOLNĚNO</span></div>
<div class="a" style="left:189px;top:691.5px;width:1219px;height:6px;background:#161616"></div>
</body></html>
